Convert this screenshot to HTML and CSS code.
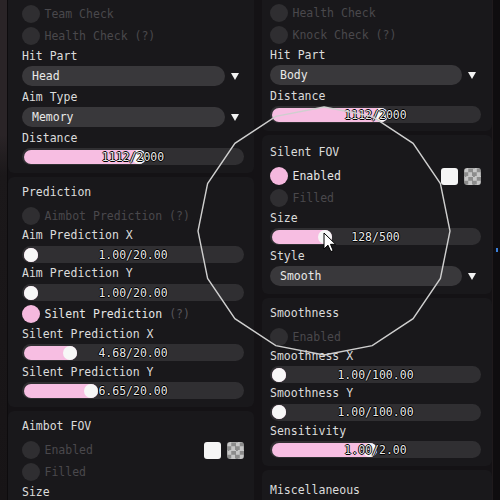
FILE: index.html
```html
<!DOCTYPE html>
<html>
<head>
<meta charset="utf-8">
<link rel="stylesheet" href="styles.css">
</head>
<body>
<div class="screen">
  <div class="edge-l"></div>

  <div class="col col-l">
    <section class="panel first">
      <div class="chk off"><span class="dot"></span><span>Team Check</span></div>
      <div class="chk off"><span class="dot"></span><span>Health Check (?)</span></div>
      <div class="lbl">Hit Part</div>
      <div class="combo-row"><div class="combo">Head</div><span class="arrow"></span></div>
      <div class="lbl">Aim Type</div>
      <div class="combo-row"><div class="combo">Memory</div><span class="arrow"></span></div>
      <div class="lbl">Distance</div>
      <div class="slider" style="--p:0.527"><span class="fill"></span><span class="knob"></span><span class="val">1112/2000</span></div>
    </section>

    <section class="panel">
      <div class="lbl hdr">Prediction</div>
      <div class="chk off"><span class="dot"></span><span>Aimbot Prediction (?)</span></div>
      <div class="lbl">Aim Prediction X</div>
      <div class="slider" style="--p:0"><span class="fill"></span><span class="knob"></span><span class="val">1.00/20.00</span></div>
      <div class="lbl">Aim Prediction Y</div>
      <div class="slider" style="--p:0"><span class="fill"></span><span class="knob"></span><span class="val">1.00/20.00</span></div>
      <div class="chk on"><span class="dot"></span><span>Silent Prediction <span class="dim">(?)</span></span></div>
      <div class="lbl">Silent Prediction X</div>
      <div class="slider" style="--p:0.194"><span class="fill"></span><span class="knob"></span><span class="val">4.68/20.00</span></div>
      <div class="lbl">Silent Prediction Y</div>
      <div class="slider" style="--p:0.297"><span class="fill"></span><span class="knob"></span><span class="val">6.65/20.00</span></div>
    </section>

    <section class="panel last">
      <div class="lbl hdr">Aimbot FOV</div>
      <div class="chk off"><span class="dot"></span><span>Enabled</span><span class="sw"><i class="white"></i><i class="checker"></i></span></div>
      <div class="chk off"><span class="dot"></span><span>Filled</span></div>
      <div class="lbl">Size</div>
    </section>
  </div>

  <div class="col col-r">
    <section class="panel first">
      <div class="chk off"><span class="dot"></span><span>Health Check</span></div>
      <div class="chk off"><span class="dot"></span><span>Knock Check (?)</span></div>
      <div class="lbl">Hit Part</div>
      <div class="combo-row"><div class="combo">Body</div><span class="arrow"></span></div>
      <div class="lbl">Distance</div>
      <div class="slider" style="--p:0.527"><span class="fill"></span><span class="knob"></span><span class="val">1112/2000</span></div>
    </section>

    <section class="panel fov-panel">
      <div class="lbl hdr">Silent FOV</div>
      <div class="chk on"><span class="dot"></span><span>Enabled</span><span class="sw"><i class="white"></i><i class="checker"></i></span></div>
      <div class="chk off"><span class="dot"></span><span>Filled</span></div>
      <div class="lbl">Size</div>
      <div class="slider" style="--p:0.24"><span class="fill"></span><span class="knob"></span><span class="val">128/500</span></div>
      <div class="lbl">Style</div>
      <div class="combo-row"><div class="combo">Smooth</div><span class="arrow"></span></div>
    </section>

    <section class="panel smooth-panel">
      <div class="lbl hdr">Smoothness</div>
      <div class="chk off"><span class="dot"></span><span>Enabled</span></div>
      <div class="lbl">Smoothness X</div>
      <div class="slider" style="--p:0"><span class="fill"></span><span class="knob"></span><span class="val">1.00/100.00</span></div>
      <div class="lbl">Smoothness Y</div>
      <div class="slider" style="--p:0"><span class="fill"></span><span class="knob"></span><span class="val">1.00/100.00</span></div>
      <div class="lbl">Sensitivity</div>
      <div class="slider" style="--p:0.47"><span class="fill"></span><span class="knob"></span><span class="val">1.00/2.00</span></div>
    </section>

    <section class="panel last misc">
      <div class="lbl hdr">Miscellaneous</div>
    </section>
  </div>

  <div class="edge-r"><span class="blip"></span></div>

  <svg class="fov" width="500" height="500" viewBox="0 0 500 500">
    <polygon points="324,107 372.2,116.4 413.1,143.3 440.4,183.6 450,231 440.4,278.4 413.1,318.7 372.2,345.6 324,355 275.8,345.6 234.9,318.7 207.6,278.4 198,231 207.6,183.6 234.9,143.3 275.8,116.4" fill="none" stroke="#cfcfcf" stroke-width="1.4"/>
  </svg>

  <svg class="cursor" width="14" height="22" viewBox="0 0 14 22">
    <path d="M1 1 L1 17 L5 13.2 L7.8 19.6 L10.2 18.6 L7.5 12.3 L12.6 12.3 Z" fill="#ffffff" stroke="#000000" stroke-width="1" stroke-linejoin="round"/>
  </svg>
</div>
</body>
</html>
```

FILE: styles.css
```css
* { box-sizing: border-box; }

body {
  margin: 0;
  background: #141215;
  font-family: "DejaVu Sans Mono", "Liberation Mono", monospace;
  font-size: 11.5px;
  color: #dcdcdc;
}

.screen {
  position: relative;
  width: 500px;
  height: 500px;
  overflow: hidden;
  display: flex;
}

.edge-l {
  width: 8px;
  flex: none;
  background: linear-gradient(#2a2427 0, #2a2427 135px, #1b181a 175px, #171416 100%);
  border-right: 1px solid #0d0b0d;
}

.col {
  display: flex;
  flex-direction: column;
  gap: 4px;
  flex: none;
}

.col-l { width: 246px; }
.col-r { width: 230px; margin-left: 8px; }

.edge-r {
  flex: 1;
  background: #0f0d0f;
  border-left: 1px solid #1f1a1c;
  display: flex;
  flex-direction: column;
  align-items: flex-end;
}

.blip {
  margin-top: 248px;
  width: 2px;
  height: 4px;
  background: #3b7fd8;
  margin-right: 2px;
}

.panel {
  background: #19181b;
  border-radius: 6px;
  padding: 9px 10px 8px 14px;
  display: flex;
  flex-direction: column;
  gap: 4.25px;
}

.col-r .panel { padding-left: 8px; padding-right: 11px; }
.col-r .fov-panel { padding-top: 11px; }
.col-r .smooth-panel { gap: 4px; }

.col-l .panel.first { padding-top: 5px; border-top-left-radius: 0; border-top-right-radius: 0; }
.col-r .panel.first { padding-top: 4px; border-top-left-radius: 0; border-top-right-radius: 0; }

.panel.last { flex: 1; border-bottom-left-radius: 0; border-bottom-right-radius: 0; }
.col-r .panel.misc { padding-top: 14px; }

.lbl {
  height: 12.5px;
  line-height: 12.5px;
  white-space: nowrap;
  color: #dcdcdc;
}

.hdr { margin-bottom: 4px; }

.chk {
  display: flex;
  align-items: center;
  height: 18px;
  gap: 4.5px;
  white-space: nowrap;
  color: #e6e6e6;
}

.chk .dot {
  width: 18px;
  height: 18px;
  border-radius: 50%;
  background: #2f2e31;
  flex: none;
}

.chk.on .dot { background: #f5b8de; }
.chk.off { color: #4a484c; }
.dim { color: #57555a; }

.sw {
  margin-left: auto;
  display: flex;
  gap: 6px;
}

.sw i {
  display: block;
  width: 17px;
  height: 17px;
  border-radius: 3px;
}

.sw .white { background: #f5f5f5; }
.sw .checker {
  background: repeating-conic-gradient(#8c8c8c 0 25%, #c6c6c6 0 50%) 50% / 8.5px 8.5px;
}

.combo-row {
  display: grid;
  grid-template-columns: 1fr 19px;
  align-items: center;
  height: 20px;
}

.combo {
  height: 20px;
  line-height: 20px;
  border-radius: 10px;
  background: #39383b;
  color: #e8e8e8;
  padding-left: 10px;
  white-space: nowrap;
}

.arrow {
  justify-self: center;
  width: 0;
  height: 0;
  border-left: 4.5px solid transparent;
  border-right: 4.5px solid transparent;
  border-top: 7px solid #f2f2f2;
}

.slider {
  position: relative;
  height: 17px;
  border-radius: 8.5px;
  background: #302f32;
}

.slider .fill {
  position: absolute;
  left: 1.5px;
  top: 1.5px;
  height: 14px;
  border-radius: 7px;
  background: #f7bee2;
  width: calc(var(--p) * (100% - 17px) + 14px);
}

.slider .knob {
  position: absolute;
  top: 1.5px;
  left: calc(1.5px + var(--p) * (100% - 17px));
  width: 14px;
  height: 14px;
  border-radius: 50%;
  background: #f7f7f7;
}

.slider .val {
  position: absolute;
  inset: 0;
  display: flex;
  align-items: center;
  justify-content: center;
  color: #e9e9e9;
  white-space: nowrap;
  text-shadow: 1px 0 0 #000, -1px 0 0 #000, 0 1px 0 #000, 0 -1px 0 #000;
}

.fov {
  position: absolute;
  left: 0;
  top: 0;
  pointer-events: none;
}

.cursor {
  position: absolute;
  left: 323px;
  top: 232px;
  pointer-events: none;
}
```
